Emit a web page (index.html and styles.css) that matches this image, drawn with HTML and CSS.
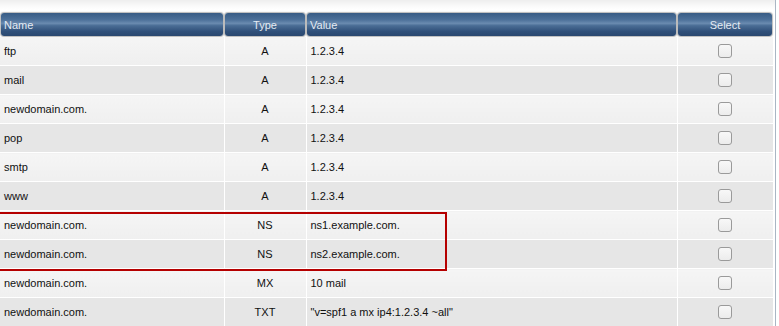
FILE: index.html
```html
<!DOCTYPE html>
<html>
<head>
<meta charset="utf-8">
<link rel="stylesheet" href="styles.css">
</head>
<body>
<div class="frame">
  <div class="wrap">
    <table class="grid">
      <colgroup>
        <col class="c-name"><col class="c-type"><col class="c-value"><col class="c-select">
      </colgroup>
      <thead>
        <tr>
          <th><div class="hd left">Name</div></th>
          <th><div class="hd center">Type</div></th>
          <th><div class="hd left">Value</div></th>
          <th><div class="hd center">Select</div></th>
        </tr>
      </thead>
      <tbody>
        <tr><td>ftp</td><td class="ct">A</td><td>1.2.3.4</td><td class="ct"><span class="cb"></span></td></tr>
        <tr><td>mail</td><td class="ct">A</td><td>1.2.3.4</td><td class="ct"><span class="cb"></span></td></tr>
        <tr><td>newdomain.com.</td><td class="ct">A</td><td>1.2.3.4</td><td class="ct"><span class="cb"></span></td></tr>
        <tr><td>pop</td><td class="ct">A</td><td>1.2.3.4</td><td class="ct"><span class="cb"></span></td></tr>
        <tr><td>smtp</td><td class="ct">A</td><td>1.2.3.4</td><td class="ct"><span class="cb"></span></td></tr>
        <tr><td>www</td><td class="ct">A</td><td>1.2.3.4</td><td class="ct"><span class="cb"></span></td></tr>
        <tr><td>newdomain.com.</td><td class="ct">NS</td><td>ns1.example.com.</td><td class="ct"><span class="cb"></span></td></tr>
        <tr><td>newdomain.com.</td><td class="ct">NS</td><td>ns2.example.com.</td><td class="ct"><span class="cb"></span></td></tr>
        <tr><td>newdomain.com.</td><td class="ct">MX</td><td>10 mail</td><td class="ct"><span class="cb"></span></td></tr>
        <tr><td>newdomain.com.</td><td class="ct">TXT</td><td>"v=spf1 a mx ip4:1.2.3.4 ~all"</td><td class="ct"><span class="cb"></span></td></tr>
      </tbody>
    </table>
    <div class="highlight"></div>
  </div>
</div>
</body>
</html>
```
FILE: styles.css
```css
html, body {
  margin: 0;
  padding: 0;
  background: #ffffff;
  font-family: "Liberation Sans", Arial, sans-serif;
  font-size: 11px;
  color: #111;
  overflow: hidden;
}
.frame {
  width: 775px;
  border-right: 1px solid #aab6c4;
  height: 326px;
  background: linear-gradient(#eeeeee 0px, #fafafa 6px, #ffffff 10px);
}
.wrap {
  position: relative;
  width: 773px;
  padding-top: 12px;
}
.grid {
  width: 773px;
  border-collapse: collapse;
  table-layout: fixed;
}
.c-name { width: 224px; }
.c-type { width: 82px; }
.c-value { width: 371px; }
.c-select { width: 96px; }
th {
  padding: 1px 1px 1px 1px;
  height: 23px;
}
.hd {
  height: 23px;
  line-height: 24px;
  border-radius: 3px;
  font-weight: normal;
  color: #e4ebf3;
  background: linear-gradient(#385c85 0%, #4d719a 30%, #6a8bb0 45%, #4a6d95 55%, #30507a 80%, #2a4870 100%);
  box-shadow: 0 0 1px 1px rgba(60, 60, 60, 0.35);
  padding: 0 3px;
  font-size: 11px;
}
.hd.left { text-align: left; }
.hd.center { text-align: center; }
td {
  height: 28px;
  padding: 0 3px 0 4px;
  border-right: 1px solid #ffffff;
  border-bottom: 1px solid #ffffff;
  white-space: nowrap;
  vertical-align: middle;
}
td:last-child { border-right: none; }
tbody tr:nth-child(odd) td { background: linear-gradient(#f5f5f5, #efefef); }
tbody tr:nth-child(even) td { background: #e6e6e6; }
td.ct { text-align: center; padding: 0; }
.cb {
  display: inline-block;
  width: 12px;
  height: 12px;
  border: 1px solid #9a9a9a;
  border-radius: 3px;
  background: linear-gradient(#f8f8f8, #ececec);
  vertical-align: middle;
}
.highlight {
  position: absolute;
  left: -3px;
  top: 212px;
  width: 446px;
  height: 55px;
  border: 2px solid #b50000;
}
```
